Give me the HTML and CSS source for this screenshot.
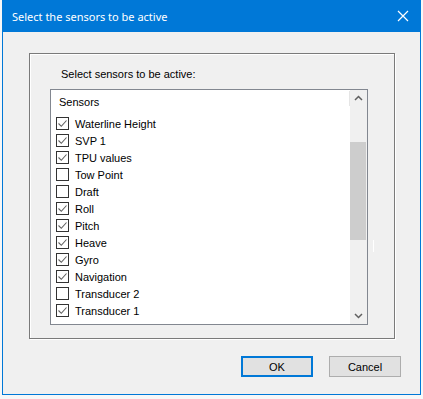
FILE: index.html
```html
<!DOCTYPE html>
<html lang="en">
<head>
    <meta charset="UTF-8">
    <title>Select the sensors to be active</title>
    <link rel="stylesheet" href="styles.css">
</head>
<body>
    <div class="window">
        <div class="titlebar">
            <span class="title">Select the sensors to be active</span>
            <svg class="close" width="12" height="12" viewBox="0 0 12 12">
                <path d="M1 1 L11 11 M11 1 L1 11" stroke="#fff" stroke-width="1.2" fill="none"/>
            </svg>
        </div>

        <div class="content">
            <div class="group">
                <div class="group-label">Select sensors to be active:</div>

                <div class="listbox">
                    <div class="list-body">
                        <div class="list-header">
                            <span>Sensors</span>
                            <span class="header-sep"></span>
                        </div>
                        <div class="row"><span class="check on"></span>Waterline Height</div>
                        <div class="row"><span class="check on"></span>SVP 1</div>
                        <div class="row"><span class="check on"></span>TPU values</div>
                        <div class="row"><span class="check"></span>Tow Point</div>
                        <div class="row"><span class="check"></span>Draft</div>
                        <div class="row"><span class="check on"></span>Roll</div>
                        <div class="row"><span class="check on"></span>Pitch</div>
                        <div class="row"><span class="check on"></span>Heave</div>
                        <div class="row"><span class="check on"></span>Gyro</div>
                        <div class="row"><span class="check on"></span>Navigation</div>
                        <div class="row"><span class="check"></span>Transducer 2</div>
                        <div class="row"><span class="check on"></span>Transducer 1</div>
                    </div>
                    <div class="scrollbar">
                        <svg class="arrow" width="17" height="17" viewBox="0 0 17 17">
                            <path d="M5 10 L8.5 6.5 L12 10" stroke="#606060" stroke-width="1.5" fill="none"/>
                        </svg>
                        <div class="track">
                            <div class="thumb"></div>
                        </div>
                        <svg class="arrow" width="17" height="17" viewBox="0 0 17 17">
                            <path d="M5 7 L8.5 10.5 L12 7" stroke="#606060" stroke-width="1.5" fill="none"/>
                        </svg>
                    </div>
                </div>
                <span class="grip"></span>
            </div>

            <div class="buttons">
                <button class="btn default">OK</button>
                <button class="btn">Cancel</button>
            </div>
        </div>
    </div>
</body>
</html>
```

FILE: styles.css
```css
* {
    box-sizing: border-box;
    margin: 0;
    padding: 0;
}

body {
    background-color: #f7f7f7;
    font-family: 'Liberation Sans', Arial, sans-serif;
    font-size: 11px;
    color: #000;
}

.window {
    margin-left: 2px;
    width: 419px;
    height: 395px;
    border: 1px solid #0078d7;
    border-top: none;
    display: flex;
    flex-direction: column;
    background: #f0f0f0;
}

.titlebar {
    height: 32px;
    background-color: #0078d7;
    color: #fff;
    display: flex;
    align-items: center;
    justify-content: space-between;
    padding: 0 10px 0 9px;
    font-family: 'Noto Sans', 'Open Sans', sans-serif;
    font-size: 11px;
}

.close {
    margin-right: 1px;
}

.content {
    flex: 1;
    display: flex;
    flex-direction: column;
}

/* Group box */
.group {
    position: relative;
    margin: 21px 0 0 26px;
    width: 366px;
    height: 286px;
    border: 1px solid #7a7a7a;
    box-shadow: inset 1px 1px 0 #fff, 1px 1px 0 #fff;
    padding: 14px 0 0 20px;
}

.group-label {
    padding-left: 11px;
    height: 21px;
}

/* List with checkboxes */
.listbox {
    width: 318px;
    height: 236px;
    border: 1px solid #828790;
    background: #fff;
    display: flex;
}

.list-body {
    flex: 1;
}

.list-header {
    height: 25px;
    padding: 6px 0 0 8px;
    display: flex;
    justify-content: space-between;
}

.header-sep {
    width: 1px;
    height: 15px;
    margin-top: -5px;
    background: #e5e5e5;
}

.row {
    height: 17px;
    display: flex;
    align-items: center;
    padding-left: 5px;
}

.check {
    width: 13px;
    height: 13px;
    border: 1px solid #333;
    margin-right: 6px;
    background: #fff;
}

.check.on {
    background: url("data:image/svg+xml;utf8,<svg xmlns='http://www.w3.org/2000/svg' width='11' height='11'><path d='M1.5 5.5 L4.3 8.3 L9.5 2.5' stroke='%23606060' stroke-width='1.1' fill='none'/></svg>") no-repeat;
}

.scrollbar {
    width: 17px;
    background: #f0f0f0;
    display: flex;
    flex-direction: column;
}

.arrow {
    display: block;
}

.track {
    flex: 1;
    padding-top: 35px;
}

.thumb {
    width: 16px;
    height: 98px;
    background: #cdcdcd;
}

.grip {
    position: absolute;
    left: 343px;
    top: 186px;
    width: 1px;
    height: 12px;
    background: #fff;
}

/* Bottom buttons */
.buttons {
    display: flex;
    justify-content: flex-end;
    gap: 16px;
    padding: 17px 19px 0 0;
}

.btn {
    width: 72px;
    height: 21px;
    background: #e1e1e1;
    border: 1px solid #adadad;
    font-family: 'Liberation Sans', Arial, sans-serif;
    font-size: 11px;
    color: #000;
}

.btn.default {
    border: 2px solid #0078d7;
}
```
